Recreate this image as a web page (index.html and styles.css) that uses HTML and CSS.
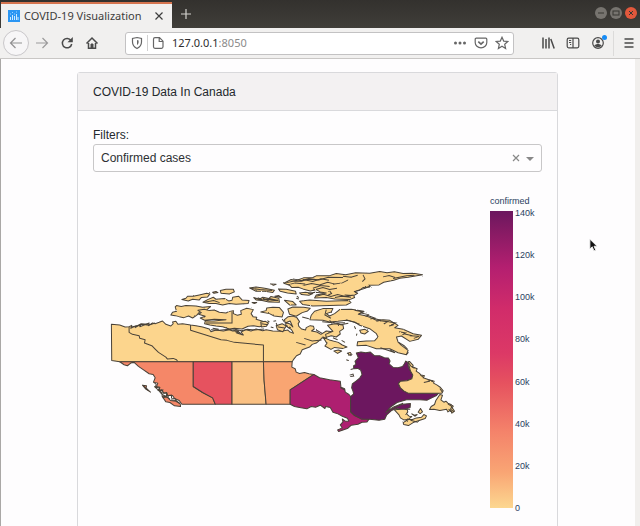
FILE: index.html
```html
<!DOCTYPE html>
<html lang="en">
<head>
<meta charset="utf-8">
<title>COVID-19 Visualization</title>
<link rel="stylesheet" href="styles.css">
</head>
<body>
<div class="window">
  <header class="titlebar">
    <div class="tab">
      <svg class="favicon" viewBox="0 0 12 12" aria-hidden="true"><rect width="12" height="12" fill="#2b96f3"/><path d="M2.5 10V7M4.5 10V5M6.5 10V6M8.500 10V4M10 10V7" stroke="#cfeaff" stroke-width="1"/><path d="M2 4h1M4 2.500h1M6 4h1M8 2h1" stroke="#9fd4ff"/></svg>
      <span class="tab-title">COVID-19 Visualization</span>
      <button class="icon-button tab-close" aria-label="Close tab"><svg viewBox="0 0 10 10"><path d="M1.500 1.500l7 7M8.500 1.500l-7 7"/></svg></button>
    </div>
    <button class="icon-button new-tab" aria-label="New tab"><svg viewBox="0 0 12 12"><path d="M6 1v10M1 6h10"/></svg></button>
    <div class="window-controls">
      <button class="window-button" aria-label="Minimize"><svg viewBox="0 0 12 12"><path d="M3 6h6"/></svg></button>
      <button class="window-button" aria-label="Maximize"><svg viewBox="0 0 12 12"><rect x="3" y="4" width="6" height="4"/></svg></button>
      <button class="window-button window-close" aria-label="Close"><svg viewBox="0 0 12 12"><path d="M4 4l4 4M8 4l-4 4"/></svg></button>
    </div>
  </header>

  <nav class="toolbar" aria-label="Navigation">
    <button class="icon-button back" aria-label="Back"><svg viewBox="0 0 14 14"><path d="M13 7H2M6.500 2L1.500 7l5 5"/></svg></button>
    <button class="icon-button forward" aria-label="Forward"><svg viewBox="0 0 14 14"><path d="M1 7h11M7.500 2l5 5-5 5"/></svg></button>
    <button class="icon-button" aria-label="Reload"><svg class="bold" viewBox="0 0 14 14"><path d="M11 4.500A4.700 4.700 0 1 0 11.700 8"/><path d="M12.800 1v5.300H7.500z" fill="currentColor" stroke="none"/></svg></button>
    <button class="icon-button" aria-label="Home"><svg class="bold" viewBox="0 0 14 14"><path d="M1.500 7.500L7 2l5.500 5.500M3.500 7v5.300h7V7"/><path d="M6 8h2v4H6z" fill="currentColor" stroke-width="1"/></svg></button>
    <div class="address">
      <svg viewBox="0 0 14 14" aria-hidden="true"><path d="M7 1.500l4.500 1v3.500c0 3-2 5.200-4.500 6.500-2.500-1.300-4.500-3.500-4.500-6.500V2.500z"/><path d="M7 4v5c1-.6 1.600-1.600 1.600-3V4.400z" fill="currentColor" stroke="none"/></svg>
      <span class="address-divider"></span>
      <svg viewBox="0 0 14 14" aria-hidden="true"><path d="M4 1.700h4.500L12 5.200v5.600c0 .9-.6 1.500-1.500 1.500H4c-.9 0-1.500-.6-1.500-1.500V3.200c0-.9.600-1.500 1.500-1.500zM8.200 2v3.500H12"/></svg>
      <span class="url">127.0.0.1<span class="port">:8050</span></span>
      <button class="icon-button" aria-label="Page actions"><svg viewBox="0 0 14 14"><g fill="currentColor" stroke="none"><circle cx="2.500" cy="7" r="1.500"/><circle cx="7" cy="7" r="1.500"/><circle cx="11.500" cy="7" r="1.500"/></g></svg></button>
      <button class="icon-button" aria-label="Save to Pocket"><svg viewBox="0 0 14 14"><path d="M2.200 2.200h9.600c.600 0 1 .4 1 1V6.500a5.800 5.300 0 0 1-11.600 0V3.200c0-.6.400-1 1-1z"/><path d="M4.300 5.700L7 8.200l2.700-2.500" stroke-width="1.600"/></svg></button>
      <button class="icon-button" aria-label="Bookmark"><svg viewBox="0 0 14 14"><path d="M7 1.300l1.700 3.800 4.100.4-3.100 2.800.9 4.200L7 10.300l-3.600 2.200.9-4.200-3.100-2.800 4.100-.4z"/></svg></button>
    </div>
    <div class="tools">
      <button class="icon-button" aria-label="Library"><svg class="bold" viewBox="0 0 14 14"><path d="M2 1.500v11M5 3v9.500M8 1.500v11M9.800 3l3.400 9.500"/></svg></button>
      <button class="icon-button" aria-label="Sidebars"><svg viewBox="0 0 14 14"><rect x="1.200" y="2.200" width="11.600" height="9.600" rx="1.500"/><path d="M7 2v10M3 4.500h2.200M3 6.500h2.200M4 8.500h1.200"/></svg></button>
      <button class="icon-button account" aria-label="Account"><svg viewBox="0 0 14 14"><circle cx="7" cy="7" r="5.300"/><circle cx="7" cy="5.400" r="2" fill="currentColor" stroke="none"/><path d="M3.300 9.500c2-2 5.400-2 7.400 0-2 2.400-5.400 2.400-7.400 0z" fill="currentColor" stroke="none"/></svg><span class="badge"></span></button>
    </div>
    <button class="icon-button menu" aria-label="Open menu"><svg class="bold" viewBox="0 0 14 14"><path d="M2.500 3h9M2.500 7h9M2.500 11h9"/></svg></button>
  </nav>

  <main class="page">
    <section class="card">
      <h1 class="card-header">COVID-19 Data In Canada</h1>
      <div class="card-body">
        <label class="filter-label" for="metric">Filters:</label>
        <div class="dropdown">
          <select id="metric"><option>Confirmed cases</option></select>
          <div class="dropdown-icons">
            <button class="icon-button clear" aria-label="Clear value"><svg viewBox="0 0 8 8"><path d="M1 1l6 6M7 1l-6 6"/></svg></button>
            <svg class="arrow" viewBox="0 0 8 8" aria-hidden="true"><path d="M0 3h8L4 7z"/></svg>
          </div>
        </div>

        <div class="figure">
          <svg class="map" viewBox="-18 -195 1188 960" role="img" aria-label="Confirmed cases by province">
            <defs>
              <filter id="shoreline" x="-5%" y="-10%" width="110%" height="120%">
                <feTurbulence type="fractalNoise" baseFrequency="0.2" numOctaves="2" seed="4"/>
                <feDisplacementMap in="SourceGraphic" scale="5" xChannelSelector="R" yChannelSelector="G"/>
              </filter>
            </defs>
            <g class="land">
              <!-- Yukon, Northwest Territories and mainland Nunavut -->
              <path class="low" d="M37 192L62 194 78 200 90 199 98 195 95 204 112 196 108 202 125 192 122 199 150 188 148 196 160 188 168 190 180 186 190 182 200 192 215 197 222 190 220 185 230 183 236 192 250 190 274 194 290 196 310 200 330 206 335 214 350 209 372 212 390 208 400 212 418 211 412 218 432 224 425 215 440 208 455 212 470 206 490 211 500 208 520 212 545 213 565 209 570 214 582 219 576 208 568 203 558 196 560 188 570 190 580 200 572 182 557 188 555 178 566 169 580 167 592 172 600 184 596 190 598 198 606 206 618 209 620 202 632 196 642 198 644 206 636 212 652 215 664 222 680 212 700 214 695 222 682 228 680 234 668 232 660 240 650 248 638 252 630 260 608 268 602 281 591 286 583 296 578 304H62L38 300z"/>
              <path class="border" d="M90 199V216L100 222 120 226 122 234 138 238 136 248 158 256 168 266 178 276 200 290 205 296 222 294 232 298 236 304M274 194V210L365 238 383 240 405 246 492 254V304"/>
              <!-- British Columbia, Alberta, Saskatchewan, Manitoba -->
              <path class="bc" d="M62 304H282V378L310 396 340 412 348 431H248L240 420 226 414 220 405 206 405 202 396 194 398 188 388 180 390 182 380 172 378 176 368 163 365 168 352 162 342 150 340 130 326 118 318 105 306 95 308 85 316 75 313z"/>
              <path class="bc" d="M188 406L204 410 214 420 230 422 243 430 244 438 226 436 212 426 200 424zM130 374L142 376 141 383 154 395 140 386z"/>
              <path class="ab" d="M282 304H398V431H348L340 412 310 396 282 378z"/>
              <path class="sk" d="M398 304H492L494 360 500 431H398z"/>
              <path class="mb" d="M492 304H578L577 320 587 325 590 335 600 339 615 336 628 340 643 342 572 388V431H500L494 360z"/>
              <!-- Ontario and Quebec -->
              <path class="on" d="M572 388L643 342 660 352 690 358 722 362 724 380 735 385 737 395 748 402 753 408V455L765 465 785 475 808 476 802 484 787 485 775 491 755 494 745 503 728 509 717 513 714 508 728 502 722 493 730 484 728 475 737 482 748 481 743 473 728 467 715 460 700 455 692 441 678 438 676 444 662 434 648 440 635 438 622 445 600 441 585 438 572 431z"/>
              <path class="qc" d="M770 278L784 275 798 277 812 275 824 286 840 286 854 292 866 293 871 302 868 310 880 321 895 322 908 318 914 310 918 302 924 306 926 320 932 332 939 344 936 355 922 361 902 362 896 370 902 382 912 391 925 397 1016 398 1010 405 994 413 982 419 960 418 920 418 892 426 872 440 858 456 870 448 885 440 908 431 932 429 931 441 910 448 890 444 875 450 861 463 855 476 838 479 810 476 785 475 765 465 753 453V408L762 400 760 392 756 382 758 370 770 361 780 353 787 342 783 329 774 324 762 325 762 316 769 312 766 303 776 292z"/>
              <!-- Labrador -->
              <path class="low" d="M925 304L929 303 940 315 938 319 952 325 949 332 958 338 964 344 974 346 970 352 985 357 1003 362 1001 368 1012 374 1022 381 1030 391 1026 398H925L912 391 902 382 896 370 902 362 922 361 936 355 939 344 932 332z"/>
            </g>
            <g class="land islands" filter="url(#shoreline)">
              <!-- Newfoundland and the Maritimes -->
              <path class="low" d="M1020 402L1028 404 1023 418 1032 425 1038 422 1044 428 1053 432 1060 437 1057 442 1064 452 1056 458 1050 450 1044 454 1040 446 1020 450 1002 446 989 447 994 438 1004 432 1008 420z"/>
              <path class="low" d="M884 448L905 446 922 446 924 454 920 460 928 467 936 468 926 476 912 478 902 472 897 462zM910 486L926 477 938 477 950 472 965 470 972 462 980 466 976 474 958 480 940 486 926 495 912 492zM936 460L944 464 952 462 946 467zM962 444L968 454 961 459 955 455z"/>
              <!-- Banks and Victoria -->
              <path class="low" d="M228 140L232 136 246 139 260 136 290 137 310 141 334 139 322 149 302 154 292 165 280 173 268 167 254 172 240 169 228 166 215 164 220 156 232 153z"/>
              <path class="low" d="M296 150L315 147 330 151 345 149 360 156 380 158 388 154 402 151 402 160 414 165 426 162 424 151 442 144 462 148 455 160 461 169 472 171 470 177 490 183 500 188 494 196 480 199 462 196 446 198 428 206 405 204 390 206 370 199 350 197 332 194 316 190 318 182 344 182 380 178 345 177 316 180 303 173 318 168 298 162 306 157z"/>
              <!-- Western Arctic islands -->
              <path class="low" d="M248 118L260 114 265 108 282 108 300 104 322 99 332 101 325 110 306 112 300 119 280 117 267 122zM363 91L380 87 402 87 405 95 390 101 365 99zM340 96L350 94 356 97 344 99zM311 126L325 118 342 111 350 117 376 115 388 122 398 120 400 111 418 108 428 119 449 121 446 130 410 132 390 130 370 134 350 130 330 130zM450 83L470 80 496 84 525 90 520 97 496 93 470 93zM513 71L530 72 522 75zM458 127L472 127 465 130zM463 112L480 117 490 111 508 115 514 109 538 114 540 126 508 125 488 121 470 119z"/>
              <path class="low" d="M484 155L500 151 502 143 520 141 540 142 552 156 548 170 524 167 510 160zM484 185L498 183 507 188 501 198 486 200zM530 196L548 190 560 197 550 214 534 208z"/>
              <!-- Central Arctic islands -->
              <path class="low" d="M537 86L560 87 588 93 590 101 564 98 542 93zM526 108L538 106 546 112zM555 120L580 124 590 134 570 134zM565 146L580 140 612 141 632 144 624 152 608 157 590 168 570 162zM600 123L630 119 680 123 748 121 754 127 740 134 690 136 640 137 610 133zM600 98L618 96 640 100 628 105 606 103z"/>
              <!-- Ellesmere and Axel Heiberg -->
              <path class="low" d="M553 69L575 58 590 61 612 53 640 52 650 47 688 47 710 40 738 44 768 38 810 39 840 34 862 38 884 35 910 40 940 39 968 44 925 51 900 54 882 60 852 66 838 74 806 75 812 80 790 82 778 91 764 94 774 99 762 106 765 112 750 118 706 116 680 112 645 113 650 104 680 98 662 95 650 88 632 92 610 86 596 81 577 82 570 75z"/>
              <!-- Baffin and Southampton -->
              <path class="low" d="M631 178L635 165 645 153 670 145 700 145 695 155 680 160 690 167 705 160 720 148 755 147 792 153 776 162 800 167 812 172 830 180 850 178 870 180 895 195 885 202 910 207 940 220 965 225 955 237 930 243 905 227 890 230 895 245 905 255 925 270 920 283 895 277 870 265 830 265 800 255 772 256 774 244 800 242 825 241 835 230 830 220 810 205 780 195 765 185 740 180 715 183 690 185 670 180z"/>
              <path class="low" d="M684 195L706 190 730 194 732 205 720 213 722 221 710 230 695 226 680 231 678 222 700 213zM670 230L692 240 716 246 728 254 742 260 730 264 705 261 694 267 676 257 682 249zM780 210L796 207 806 213 795 221 784 218zM703 272L716 269 726 272 714 279zM746 278L752 276 755 281 748 285z"/>
            </g>
            <path class="border" d="M398 154V188H320"/>
            <!-- Fjords and broken shoreline -->
            <g class="coast" filter="url(#shoreline)">
              <path d="M163 365l8 6-2 9 12 2-4 8 14-1-4 8 16 1-2 8 16-2 0 9 12 2 4 10M165 378l12 10 12 14 18 9M190 412l14-3 10 9 16 2 12 9M134 377l12 12"/>
              <path d="M95 200l20-4 15-4 18 3 20-7M110 198l16-8 20 2M335 208l24 2 30-3 28 6 12 11M408 214l22 8M340 204l18 3M400 205l26 6 18-4 22 2 28-3"/>
              <path d="M468 115l20 4 22-4 26 6M475 112l14 7 18-2 30 4M490 114l20 9 26-4M315 126l28-5 18 6M452 84l30 4 36 3M560 68l20-5 26 0 18-6 34 2M565 74l22-6 30 3M580 56l26 5 22-6 30 4 28-8 44 1"/>
              <path d="M610 76l26-6 24 4 24-8 20 5M640 90l30-8 20 6 22-4M650 108l22-6 22 7 20-6 24 6 24-5M690 92l6 8-10 4M730 48l24 3 20-6M700 72l28-4 18-9M706 112l20-4 28 3M790 44l6 12-8 8M850 50l18-4 18 6M880 55l40-8 24-2M610 58l30 6 24-8 24 4M626 100l20-4 24 2M640 84l24-8 26 3M770 92l26-8 14-6M735 104l24 2"/>
              <path d="M680 148l-4 16 18 10M765 150l26 5-12 5M784 158l22 5-8 6M802 165l22 8-12 3M820 174l24 6-14 3M842 181l22 3-12 7M866 184l22 4-14 6M882 193l-14 4M898 214l20 4-10 5M912 220l26 6M930 226l28 2-16 6M897 246l16 10 10 10M668 184l40 4 28-1M700 186l24 7 22-4M842 262l20 7 24 8"/>
              <path d="M614 234l24 8 28-3M590 246l28 8M560 195l14 8M650 209l18 10M740 178l40 14M536 200l20 3M486 190l20 3M700 232l14 6M726 240l10 6"/>
              <path d="M722 381l14 8M750 344l10-3 2 6-10 1M753 327l8-2M740 298l6 2M742 278l4 2M870 268l14 8M920 282l6-6M926 306l8 12 10 6M962 344l8 6M972 366l26-6M984 358l16 6M1020 384l8 12M1044 430l12 8-4 8 10 8M1046 446l10 8M862 452l18-12 30-12M915 446l16 0M932 479l22 6"/>
              <path d="M522 183l8-2M530 188l4 10M592 108l6 4M598 116l-8-2M752 286l6-4M764 198l4 8M772 220l-2 6M690 180l8 10M608 170l20 5M504 181l6 4M514 200l8 2M548 176l6 8"/>
            </g>
          </svg>
          <div class="legend">
            <div class="legend-title">confirmed</div>
            <div class="legend-scale">
              <div class="colorbar"></div>
              <div class="ticks"><span>140k</span><span>120k</span><span>100k</span><span>80k</span><span>60k</span><span>40k</span><span>20k</span><span>0</span></div>
            </div>
          </div>
        </div>
      </div>
    </section>
    <svg class="pointer" viewBox="0 0 10 15" aria-hidden="true"><path d="M1 1v11l2.600-2.500L5.500 14l2-.8-1.900-4.300H9z"/></svg>
  </main>
</div>
</body>
</html>
```
FILE: styles.css
```css
* {
  box-sizing: border-box;
}

body {
  margin: 0;
  background: #fefdfe;
  color: #24292d;
  font-family: "Liberation Sans", Arial, sans-serif;
  font-size: 12px;
  line-height: 18px;
}

button {
  margin: 0;
  padding: 0;
  border: 0;
  background: none;
  color: inherit;
  font: inherit;
}

.window {
  display: flex;
  flex-direction: column;
  height: 100vh;
  overflow: hidden;
}

/* Title bar */

.titlebar {
  display: flex;
  flex: none;
  height: 28px;
  padding-left: 1px;
  background: linear-gradient(#33312e, #403e39);
  font-family: "Noto Sans", sans-serif;
}

.tab {
  display: flex;
  align-items: center;
  width: 171px;
  margin-top: 2px;
  padding: 0 8px 0 7px;
  border-top: 2px solid #d5744f;
  background: #f1f0ef;
  color: #3d3d3d;
  font-size: 11px;
}

.favicon {
  width: 12px;
  height: 12px;
  margin-right: 4px;
}

.tab-title {
  flex: 1;
  white-space: nowrap;
}

.icon-button {
  display: flex;
  flex: none;
  align-items: center;
  justify-content: center;
}

.icon-button svg,
.address > svg {
  flex: none;
  width: 14px;
  height: 14px;
  fill: none;
  stroke: currentColor;
  stroke-width: 1.2;
}

.icon-button svg.bold {
  stroke-width: 1.5;
}

.icon-button.tab-close svg {
  width: 10px;
  height: 10px;
}

.new-tab {
  width: 27px;
  color: #d4d2ce;
}

.icon-button.new-tab svg {
  width: 12px;
  height: 12px;
}

.window-controls {
  display: flex;
  align-items: center;
  gap: 3px;
  margin-left: auto;
  padding: 0 3px 2px 0;
}

.window-button {
  width: 12px;
  height: 12px;
  border-radius: 50%;
  background: #77746f;
  color: #393733;
}

.window-close {
  background: #e2583c;
}

.window-button svg {
  display: block;
  fill: none;
  stroke: currentColor;
}

/* Toolbar */

.toolbar {
  display: flex;
  flex: none;
  align-items: center;
  height: 31px;
  padding: 0 2px 0 3px;
  border-bottom: 1px solid #c9c7c5;
  background: #f1f0ef;
  color: #4a4a4a;
}

.toolbar > .icon-button {
  width: 25px;
  height: 25px;
}

.toolbar > .back {
  width: 26px;
  height: 26px;
  border: 1px solid #c9c7ca;
  border-radius: 50%;
  background: #f7f6f7;
  color: #929192;
}

.toolbar > .forward {
  color: #9b9a9b;
}

.address {
  display: flex;
  flex: 1;
  align-items: center;
  gap: 7px;
  height: 23px;
  margin-left: 21px;
  padding: 0 4px;
  border: 1px solid #c3c2c3;
  border-radius: 3px;
  background: #fff;
  color: #666;
}

.address-divider {
  width: 1px;
  height: 16px;
  margin: 0 -4px;
  background: #d0d0d0;
}

.url {
  flex: 1;
  color: #2d2d2d;
  font-family: "Noto Sans", sans-serif;
  font-size: 11px;
}

.port {
  color: #8b8b8b;
}

.tools {
  display: flex;
  gap: 11px;
  margin: 0 8px 0 27px;
}

.account {
  position: relative;
}

.badge {
  position: absolute;
  top: -1px;
  right: -2px;
  width: 5px;
  height: 5px;
  border-radius: 50%;
  background: #168bf5;
}

.toolbar > .menu {
  border-left: 1px solid #dcdbda;
  padding-left: 6px;
}

/* Page */

.page {
  position: relative;
  flex: 1;
  min-height: 0;
  padding: 13px 77px 0 76px;
  overflow: hidden;
  border-right: 5px solid #f1efed;
  border-left: 1px solid #aaa8a6;
}

.card {
  min-height: 500px;
  border: 1px solid #d9d9dc;
  border-radius: 3px;
}

.card-header {
  margin: 0;
  padding: 10px 15px 9px;
  border-bottom: 1px solid #d9d9dc;
  background: #f3f1f2;
  font-size: 12px;
  font-weight: 400;
}

.card-body {
  padding: 15px;
}

.filter-label {
  display: block;
}

.dropdown {
  position: relative;
}

.dropdown select {
  display: block;
  width: 100%;
  height: 28px;
  padding: 0 7px;
  border: 1px solid #c8c7c8;
  border-radius: 3px;
  background: #fefdfe;
  color: #2d3033;
  font: inherit;
  appearance: none;
}

.dropdown-icons {
  position: absolute;
  top: 0;
  right: 8px;
  display: flex;
  align-items: center;
  gap: 6px;
  height: 28px;
  color: #888;
}

.icon-button.clear svg,
.arrow {
  width: 8px;
  height: 8px;
}

.arrow {
  fill: currentColor;
}

.figure {
  display: flex;
  align-items: flex-start;
  margin-top: 23px;
}

.map {
  flex: 1;
  min-width: 0;
}

.land {
  stroke: #494238;
  stroke-width: 3;
  stroke-linejoin: round;
}

.coast,
.border {
  fill: none;
  stroke: #494238;
  stroke-width: 3;
}

.low { fill: #fcd58d; }
.bc { fill: #f58768; }
.ab { fill: #e6525f; }
.sk { fill: #fac083; }
.mb { fill: #f9a572; }
.on { fill: #ae1f70; }
.qc { fill: #6c175f; }

.legend {
  flex: none;
  width: 52px;
  color: #2a3f5f;
  font-size: 9px;
  line-height: 12px;
}

.legend-scale {
  display: flex;
  gap: 2px;
  height: 307px;
}

.colorbar {
  width: 23px;
  margin: 4px 0 6px;
  background: linear-gradient(#6b175e, #8b1b65 8%, #b41f70 19%, #d12c6a 33%, #dc3966 48%, #e6525f 58%, #f4826a 74%, #f9a574 88%, #fcd790);
}

.ticks {
  display: flex;
  flex-direction: column;
  justify-content: space-between;
}

.pointer {
  position: absolute;
  top: 179px;
  right: 37px;
  width: 9px;
  height: 14px;
  fill: #111;
  stroke: #eee;
}
```
